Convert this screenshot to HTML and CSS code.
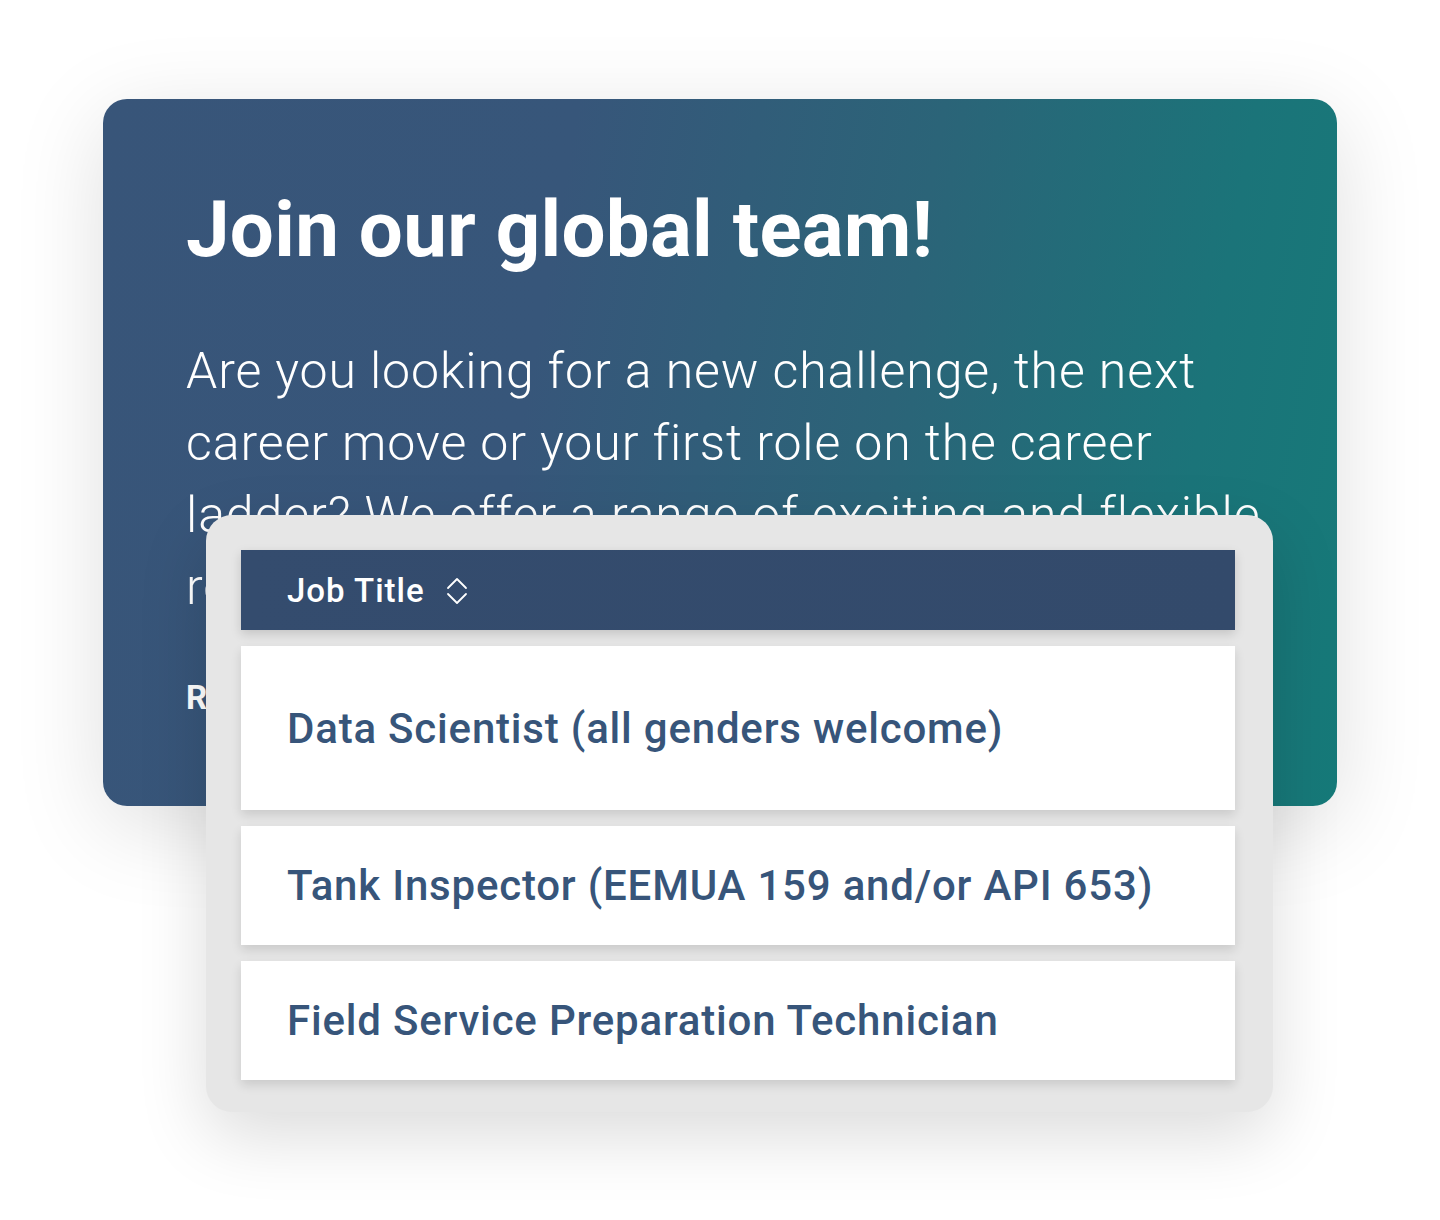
FILE: index.html
```html
<!DOCTYPE html>
<html lang="en">
<head>
<meta charset="utf-8">
<title>Join our global team</title>
<link rel="stylesheet" href="styles.css">
</head>
<body>
<div class="stage">
  <section class="hero">
    <h1 class="hero-title">Join our global team!</h1>
    <p class="hero-text">Are you looking for a new challenge, the next<br>career move or your first role on the career<br>ladder? We offer a range of exciting and flexible<br>roles in a dynamic, international environment.</p>
    <a class="hero-link" href="#">Read more</a>
  </section>
  <div class="jobs">
    <div class="jobs-head">
      <span class="jobs-head-label">Job Title</span>
      <svg class="sort-icon" width="22" height="28" viewBox="0 0 22 28" aria-hidden="true">
        <path d="M2 11 L11 2 L20 11" fill="none" stroke="#ffffff" stroke-width="1.8" stroke-linecap="round" stroke-linejoin="round"/>
        <path d="M2 17 L11 26 L20 17" fill="none" stroke="#ffffff" stroke-width="1.8" stroke-linecap="round" stroke-linejoin="round"/>
      </svg>
    </div>
    <div class="job job-tall">Data Scientist (all genders welcome)</div>
    <div class="job">Tank Inspector (EEMUA 159 and/or API 653)</div>
    <div class="job">Field Service Preparation Technician</div>
  </div>
</div>
</body>
</html>
```
FILE: styles.css
```css
html, body {
  margin: 0;
  padding: 0;
  background: #ffffff;
}
body {
  width: 1440px;
  height: 1220px;
  overflow: hidden;
  font-family: Roboto, "Noto Sans", sans-serif;
}
.stage {
  position: relative;
  padding: 99px 103px 0 103px;
}
.hero {
  box-sizing: border-box;
  width: 1234px;
  height: 707px;
  border-radius: 24px;
  background: linear-gradient(100deg, #385579 0%, #37567a 35%, #2b6478 62%, #1b7479 85%, #167a79 100%);
  box-shadow: 0 20px 90px rgba(0, 0, 0, 0.13);
  padding: 86px 60px 0 83px;
  color: #ffffff;
  overflow: hidden;
}
.hero-title {
  margin: 0;
  font-size: 78px;
  font-weight: 700;
  line-height: 90px;
  letter-spacing: 0.3px;
}
.hero-text {
  margin: 60px 0 0 0;
  font-size: 50px;
  font-weight: 300;
  line-height: 72px;
  letter-spacing: 0.9px;
  white-space: nowrap;
}
.hero-link {
  display: block;
  margin-top: 55px;
  font-size: 33px;
  font-weight: 700;
  color: #ffffff;
  text-decoration: none;
}
.jobs {
  position: absolute;
  left: 206px;
  top: 515px;
  box-sizing: border-box;
  width: 1067px;
  height: 597px;
  padding: 35px 38px 0 35px;
  background: #e6e6e6;
  border-radius: 26px;
  box-shadow: 0 24px 70px rgba(0, 0, 0, 0.14);
  display: flex;
  flex-direction: column;
  gap: 16px;
}
.jobs-head {
  height: 80px;
  box-sizing: border-box;
  background: linear-gradient(90deg, #344c6e 0%, #334a6b 100%);
  display: flex;
  align-items: center;
  gap: 21px;
  padding-left: 46px;
  color: #ffffff;
  box-shadow: 0 4px 10px rgba(0, 0, 0, 0.15);
}
.jobs-head-label {
  font-size: 33px;
  font-weight: 500;
  letter-spacing: 1px;
}
.sort-icon {
  display: block;
  margin-top: 2px;
}
.job {
  height: 119px;
  box-sizing: border-box;
  background: #ffffff;
  display: flex;
  align-items: center;
  padding-left: 46px;
  font-size: 42px;
  font-weight: 500;
  letter-spacing: 0.8px;
  color: #37557a;
  box-shadow: 0 5px 10px rgba(0, 0, 0, 0.12);
}
.job-tall {
  height: 164px;
}
```
